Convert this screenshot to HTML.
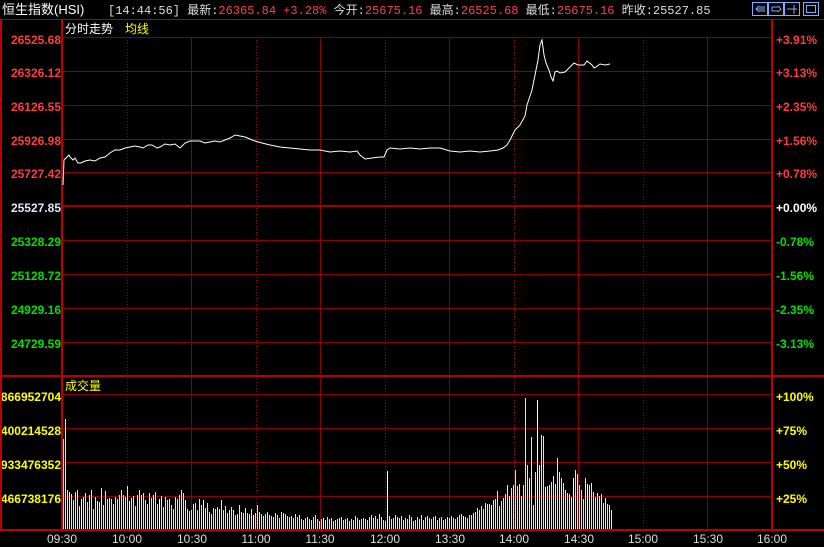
<!DOCTYPE html>
<html><head><meta charset="utf-8"><style>
html,body{margin:0;padding:0;background:#000;}
svg{display:block;}
text{font-family:"Liberation Sans","Noto Sans CJK SC",sans-serif;}
.b{font-weight:bold;font-size:12px;}
.m{font-family:"Liberation Mono","Noto Sans CJK SC",monospace;font-size:12px;}
</style></head><body>
<svg width="824" height="547" viewBox="0 0 824 547" xmlns="http://www.w3.org/2000/svg">
<rect width="824" height="547" fill="#000"/>
<text x="2" y="14" fill="#fff" style="font-size:13px">恒生指数(HSI)</text>
<text x="108" y="14" class="m" fill="#ddd">[14:44:56] 最新:<tspan fill="#ff4040">26365.84 +3.28%</tspan> 今开:<tspan fill="#ff4040">25675.16</tspan> 最高:<tspan fill="#ff4040">26525.68</tspan> 最低:<tspan fill="#ff4040">25675.16</tspan> 昨收:<tspan fill="#ddd">25527.85</tspan></text>
<g fill="none" stroke="#7ab0ff" stroke-width="1">
<rect x="752.5" y="2.5" width="15" height="13"/><rect x="768.5" y="2.5" width="15" height="13"/><rect x="784.5" y="2.5" width="15" height="13"/><rect x="803.5" y="2.5" width="15" height="13"/>
<path d="M756 9h9M759 6l-3 3 3 3M759 7h6M759 11h6"/>
<path d="M772 7h6M772 11h6M772 7v4M778 6l3 3-3 3"/>
<path d="M787 9h10M794 5v9"/>
<rect x="806.5" y="5.5" width="9" height="7"/>
</g>
<line x1="0" y1="19.5" x2="824" y2="19.5" stroke="#b00" />
<g stroke="#8b0000" stroke-width="1">
<path d="M62 37.5H772M62 71.5H772M62 105.5H772M62 139.5H772M62 172.5H772M62 240.5H772M62 274.5H772M62 308.5H772M62 342.5H772"/>
<path d="M62 394.5H772M62 428.5H772M62 462.5H772M62 496.5H772"/>
<path d="M191.5 37V530M320.5 37V530M449.5 37V530M578.5 37V530M707.5 37V530"/>
</g>
<path d="M62 206H772" stroke="#a00000" stroke-width="2"/>
<g stroke="#a00000" stroke-width="1" stroke-dasharray="1 2">
<path d="M127.5 37V530M256.5 37V530M385.5 37V530M514.5 37V530M643.5 37V530"/>
</g>
<g stroke="#c00000" stroke-width="2">
<path d="M62 20V530M772 20V530M0 376H824M0 530H824M1 20V530"/>
</g>
<text x="65" y="33" fill="#fff" style="font-size:12px">分时走势</text>
<text x="125" y="33" fill="#ffff00" style="font-size:12px">均线</text>
<text x="65" y="390" fill="#ffff00" style="font-size:12px">成交量</text>
<g class="b" text-anchor="end">
<text x="61" y="44" fill="#ff3c3c">26525.68</text>
<text x="61" y="77" fill="#ff3c3c">26326.12</text>
<text x="61" y="111" fill="#ff3c3c">26126.55</text>
<text x="61" y="145" fill="#ff3c3c">25926.98</text>
<text x="61" y="178" fill="#ff3c3c">25727.42</text>
<text x="61" y="212" fill="#e0e8ff">25527.85</text>
<text x="61" y="246" fill="#00e000">25328.29</text>
<text x="61" y="280" fill="#00e000">25128.72</text>
<text x="61" y="314" fill="#00e000">24929.16</text>
<text x="61" y="348" fill="#00e000">24729.59</text>
<text x="61" y="401" fill="#ffff00">1866952704</text>
<text x="61" y="435" fill="#ffff00">1400214528</text>
<text x="61" y="469" fill="#ffff00">933476352</text>
<text x="61" y="503" fill="#ffff00">466738176</text>
</g>
<rect x="0" y="380" width="2" height="140" fill="#c00000"/>
<g class="b">
<text x="776" y="44" fill="#ff3c3c">+3.91%</text>
<text x="776" y="77" fill="#ff3c3c">+3.13%</text>
<text x="776" y="111" fill="#ff3c3c">+2.35%</text>
<text x="776" y="145" fill="#ff3c3c">+1.56%</text>
<text x="776" y="178" fill="#ff3c3c">+0.78%</text>
<text x="776" y="212" fill="#fff">+0.00%</text>
<text x="776" y="246" fill="#00e000">-0.78%</text>
<text x="776" y="280" fill="#00e000">-1.56%</text>
<text x="776" y="314" fill="#00e000">-2.35%</text>
<text x="776" y="348" fill="#00e000">-3.13%</text>
<text x="776" y="401" fill="#ffff00">+100%</text>
<text x="776" y="435" fill="#ffff00">+75%</text>
<text x="776" y="469" fill="#ffff00">+50%</text>
<text x="776" y="503" fill="#ffff00">+25%</text>
</g>
<g class="m" fill="#ddd" text-anchor="middle">
<text x="62" y="543">09:30</text><text x="127" y="543">10:00</text><text x="192" y="543">10:30</text><text x="256" y="543">11:00</text><text x="320" y="543">11:30</text><text x="385" y="543">12:00</text><text x="450" y="543">13:30</text><text x="514" y="543">14:00</text><text x="579" y="543">14:30</text><text x="643" y="543">15:00</text><text x="708" y="543">15:30</text><text x="772" y="543">16:00</text>
</g>
<polyline fill="none" stroke="#fff" stroke-width="1" points="63,185 64,160 66,158 69,155 70,157 73,160 75,158 78,163 81,163 85,161 90,160 95,161 100,158 105,157 110,153 113,151 115,150 120,150 125,148 130,147 135,146 140,147 143,148 148,145 152,145 157,148 160,147 165,144 170,145 175,144 180,148 185,143 190,141 196,141 200,141 205,143 210,142 215,141 220,142 225,140 230,138 235,135 240,136 245,137 250,139 255,141 262,143 270,145 280,147 290,148 300,149 310,150 320,150 330,152 340,151 350,152 357,151 360,155 365,159 372,158 380,157 384,157 387,150 390,148 400,149 410,148 420,149 430,148 440,148 450,151 460,152 470,151 480,152 490,151 498,150 503,148 507,145 510,140 515,130 518,127 520,125 525,116 527,105 530,96 532,90 534,80 536,70 538,60 540,45 542,40 544,55 546,63 549,70 551,77 553,81 555,72 557,71 560,73 565,72 570,67 574,63 578,65 584,65 587,61 592,65 594,68 596,67 600,64 605,65 610,64"/>
<g id="vb" shape-rendering="crispEdges"></g>
</svg>
<script>
var t=[439,419,490,492,494,500,492,490,506,499,497,493,502,495,490,509,497,501,502,488,
505,491,499,498,499,504,497,499,495,490,495,497,486,501,498,496,506,495,490,495,
493,500,504,493,498,495,492,504,499,496,507,497,500,499,505,509,497,499,495,490,
493,500,509,511,510,504,503,510,499,505,500,508,503,512,514,508,509,507,509,500,
510,506,513,510,507,510,515,514,505,512,513,508,513,514,509,515,513,505,512,514,
516,514,512,515,516,517,513,515,518,512,513,514,516,517,516,518,514,517,515,519,
520,518,517,519,520,517,515,519,521,519,518,520,517,519,518,521,520,519,518,517,
520,519,518,521,519,520,516,518,520,519,518,519,520,517,515,518,516,519,514,517,
520,521,471,516,519,518,515,517,518,516,520,518,519,515,517,521,520,517,519,515,
520,517,516,518,519,517,516,520,518,517,520,519,517,518,516,518,519,517,515,514,
516,517,518,515,515,513,512,508,510,506,509,503,504,504,505,500,499,491,506,501,
498,494,485,496,488,485,470,486,484,496,485,398,465,478,437,505,472,400,465,435,
436,487,486,485,482,476,484,458,472,478,483,490,493,494,497,478,470,474,485,490,
499,478,484,485,483,492,497,493,496,494,503,498,504,505,510];
var white={9:1,17:1,33:1,48:1,70:1,95:1,130:1,162:1,200:1,214:1,237:1,241:1,255:1,262:1};
var g=document.getElementById("vb"),ns="http://www.w3.org/2000/svg";
for(var i=0;i<t.length;i++){var r=document.createElementNS(ns,"rect");
r.setAttribute("x",63+2*i);r.setAttribute("y",t[i]);r.setAttribute("width",1);r.setAttribute("height",529-t[i]);
r.setAttribute("fill",white[i]?"#ffffff":"#ffff00");g.appendChild(r);}
</script>
</body></html>
